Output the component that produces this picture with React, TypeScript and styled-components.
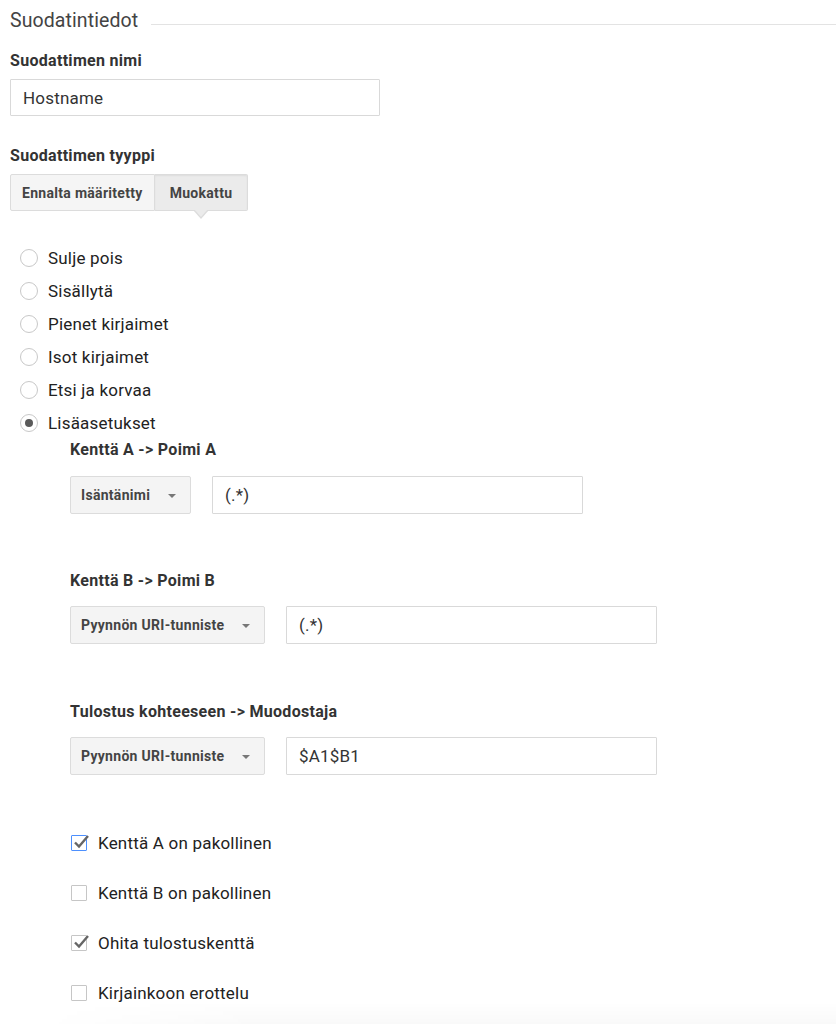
import React from 'react';
import styled, { createGlobalStyle } from 'styled-components';

const GlobalStyle = createGlobalStyle`
  body {
    margin: 0;
    background: #fff;
    font-family: Roboto, "Noto Sans", Arial, sans-serif;
    color: #333;
  }
`;

const Page = styled.div`
  padding: 8px 0 40px 10px;
  width: 826px;
`;

const Legend = styled.div`
  display: flex;
  align-items: center;
  gap: 13px;
  height: 24px;
  font-size: 19.5px;
  letter-spacing: 0.1px;
  color: #444;
`;

const LegendLine = styled.div`
  flex: 1;
  height: 1px;
  background: #e3e3e3;
  margin-top: 8px;
`;

const Label = styled.div<{ top: number }>`
  margin-top: ${({ top }) => top}px;
  height: 20px;
  line-height: 20px;
  font-size: 16px;
  font-weight: 700;
  letter-spacing: 0.3px;
  color: #333;
`;

const TextInput = styled.input<{ w: number }>`
  display: block;
  box-sizing: border-box;
  width: ${({ w }) => w}px;
  height: 38px;
  border: 1px solid #d9d9d9;
  border-radius: 1px;
  padding: 0 12px;
  font-family: inherit;
  font-size: 17px;
  letter-spacing: 0.2px;
  color: #333;
  outline: none;
  background: #fff;
`;

const NameInput = styled(TextInput)`
  margin-top: 8px;
  height: 37px;
`;

const Tabs = styled.div`
  display: flex;
  margin-top: 8px;
  width: max-content;
`;

const Tab = styled.div<{ active?: boolean }>`
  position: relative;
  height: 37px;
  box-sizing: border-box;
  display: flex;
  align-items: center;
  padding: 0 ${({ active }) => (active ? '15px' : '11px')};
  font-size: 14px;
  font-weight: 700;
  letter-spacing: 0.3px;
  color: #444;
  background: ${({ active }) => (active ? '#ebebeb' : '#f5f5f5')};
  border: 1px solid #dcdcdc;
  border-left-width: ${({ active }) => (active ? '0' : '1px')};
  border-radius: ${({ active }) => (active ? '0 2px 2px 0' : '2px 0 0 2px')};
  box-shadow: ${({ active }) => (active ? 'inset 0 1px 2px rgba(0,0,0,0.06)' : 'none')};
`;

const Pointer = styled.span`
  position: absolute;
  left: 50%;
  bottom: -9px;
  width: 0;
  height: 0;
  margin-left: -8px;
  border-left: 8px solid transparent;
  border-right: 8px solid transparent;
  border-top: 9px solid #dcdcdc;

  &::after {
    content: '';
    position: absolute;
    left: -7px;
    top: -10px;
    border-left: 7px solid transparent;
    border-right: 7px solid transparent;
    border-top: 8px solid #ebebeb;
  }
`;

const RadioList = styled.div`
  margin-top: 30px;
  display: flex;
  flex-direction: column;
`;

const RadioRow = styled.div`
  display: flex;
  align-items: center;
  height: 33px;
  gap: 10px;
  padding-left: 10px;
  font-size: 17px;
  letter-spacing: 0.2px;
  color: #222;
`;

const RadioCircle = styled.span<{ checked?: boolean }>`
  box-sizing: border-box;
  width: 18px;
  height: 18px;
  border-radius: 50%;
  border: 1px solid #c8c8c8;
  display: flex;
  align-items: center;
  justify-content: center;

  &::after {
    content: '';
    width: 8px;
    height: 8px;
    border-radius: 50%;
    background: ${({ checked }) => (checked ? '#5a5a5a' : 'transparent')};
  }
`;

const Advanced = styled.div`
  padding-left: 60px;
  padding-top: 1px;
`;

const FieldRow = styled.div<{ top: number }>`
  display: flex;
  align-items: center;
  gap: 21px;
  margin-top: ${({ top }) => top}px;
`;

const Select = styled.div<{ w: number }>`
  box-sizing: border-box;
  width: ${({ w }) => w}px;
  height: 38px;
  display: flex;
  align-items: center;
  justify-content: space-between;
  padding: 0 14px 0 10px;
  background: #f4f4f4;
  border: 1px solid #dcdcdc;
  border-radius: 2px;
  font-size: 14px;
  font-weight: 700;
  letter-spacing: 0.3px;
  color: #444;
`;

const Caret = styled.span`
  width: 0;
  height: 0;
  border-left: 4px solid transparent;
  border-right: 4px solid transparent;
  border-top: 4px solid #777;
  margin-top: 2px;
`;

const CheckList = styled.div`
  margin-top: 43px;
  display: flex;
  flex-direction: column;
`;

const CheckRow = styled.div`
  display: flex;
  align-items: center;
  gap: 11px;
  height: 50px;
  padding-left: 1px;
  font-size: 17px;
  letter-spacing: 0.2px;
  color: #222;
`;

const Box = styled.span<{ focused?: boolean }>`
  position: relative;
  box-sizing: border-box;
  width: 16px;
  height: 16px;
  border: 1px solid ${({ focused }) => (focused ? '#4d90fe' : '#c6c6c6')};
  border-radius: 1px;
  background: #fff;

  svg {
    position: absolute;
    left: 0;
    top: -4px;
  }
`;

const BottomShade = styled.div`
  position: fixed;
  left: 0;
  right: 0;
  bottom: 0;
  height: 22px;
  pointer-events: none;
  background: linear-gradient(to bottom, rgba(0, 0, 0, 0), rgba(0, 0, 0, 0.025));
  -webkit-mask-image: linear-gradient(to right, transparent 40px, #000 260px);
  mask-image: linear-gradient(to right, transparent 40px, #000 260px);
`;

const Check = () => (
  <svg width="19" height="19" viewBox="0 0 19 19">
    <path d="M3 10.5 L7 14.5 L16 4" fill="none" stroke="#666" strokeWidth="2.4" />
  </svg>
);

const radios = ['Sulje pois', 'Sisällytä', 'Pienet kirjaimet', 'Isot kirjaimet', 'Etsi ja korvaa', 'Lisäasetukset'];

const checks = [
  { label: 'Kenttä A on pakollinen', checked: true, focused: true },
  { label: 'Kenttä B on pakollinen', checked: false },
  { label: 'Ohita tulostuskenttä', checked: true },
  { label: 'Kirjainkoon erottelu', checked: false },
];

const App: React.FC = () => {
  return (
    <>
      <GlobalStyle />
      <Page>
        <Legend>
          Suodatintiedot
          <LegendLine />
        </Legend>

        <Label top={19}>Suodattimen nimi</Label>
        <NameInput w={370} defaultValue="Hostname" />

        <Label top={30}>Suodattimen tyyppi</Label>
        <Tabs>
          <Tab>Ennalta määritetty</Tab>
          <Tab active>
            Muokattu
            <Pointer />
          </Tab>
        </Tabs>

        <RadioList>
          {radios.map((r, i) => (
            <RadioRow key={r}>
              <RadioCircle checked={i === radios.length - 1} />
              {r}
            </RadioRow>
          ))}
        </RadioList>

        <Advanced>
          <Label top={0}>Kenttä A -&gt; Poimi A</Label>
          <FieldRow top={16}>
            <Select w={121}>
              Isäntänimi
              <Caret />
            </Select>
            <TextInput w={371} defaultValue="(.*)" />
          </FieldRow>

          <Label top={57}>Kenttä B -&gt; Poimi B</Label>
          <FieldRow top={15}>
            <Select w={195}>
              Pyynnön URI-tunniste
              <Caret />
            </Select>
            <TextInput w={371} defaultValue="(.*)" />
          </FieldRow>

          <Label top={58}>Tulostus kohteeseen -&gt; Muodostaja</Label>
          <FieldRow top={15}>
            <Select w={195}>
              Pyynnön URI-tunniste
              <Caret />
            </Select>
            <TextInput w={371} defaultValue="$A1$B1" />
          </FieldRow>

          <CheckList>
            {checks.map((c) => (
              <CheckRow key={c.label}>
                <Box focused={c.focused}>{c.checked && <Check />}</Box>
                {c.label}
              </CheckRow>
            ))}
          </CheckList>
        </Advanced>
      </Page>
      <BottomShade />
    </>
  );
};

export default App;
